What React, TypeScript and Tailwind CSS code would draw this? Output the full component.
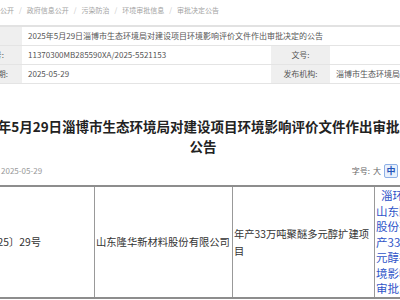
const crumbs = ["信息公开", "政府信息公开", "污染防治", "环境审批信息", "审批决定公告"];

const linkLines = [
  "淄环审〔2025〕29号",
  "山东隆华新材料",
  "股份有限公司年",
  "产33万吨聚醚多",
  "元醇扩建项目环",
  "境影响报告书的",
  "审批意见",
];

function Breadcrumb() {
  return (
    <div className="flex h-[20px] items-center whitespace-nowrap text-[7px] text-[#a3a3a3]">
      {crumbs.map((c, i) => (
        <span key={c} className={i === 0 ? "-ml-[14px] flex items-center" : "flex items-center"}>
          {i > 0 ? <span className="mx-[5px] text-[#c4c4c4]">/</span> : null}
          {c}
        </span>
      ))}
    </div>
  );
}

function InfoTable() {
  const label = "flex items-center justify-center bg-[#efefef] border-b border-[#e4e4e4]";
  const value = "flex items-center pl-[6px] border-b border-[#e4e4e4] bg-white";
  return (
    <div className="mt-[5px] -ml-[40px] grid w-[660px] grid-cols-[62px_249px_59px_290px] border-t-2 border-[#e2e2e2] text-[8px] leading-none text-[#555]">
      <div className={`${label} h-[19px]`}>标题:</div>
      <div className={`${value} col-span-3 h-[19px]`}>
        2025年5月29日淄博市生态环境局对建设项目环境影响评价文件作出审批决定的公告
      </div>
      <div className={`${label} h-[19px]`}>索引号:</div>
      <div className={`${value} h-[19px]`}>11370300MB285590XA/2025-5521153</div>
      <div className={`${label} h-[19px]`}>文号:</div>
      <div className={`${value} h-[19px]`} />
      <div className={`${label} h-[19px]`}>发布日期:</div>
      <div className={`${value} h-[19px]`}>2025-05-29</div>
      <div className={`${label} h-[19px]`}>发布机构:</div>
      <div className={`${value} h-[19px]`}>淄博市生态环境局</div>
    </div>
  );
}

function Article() {
  return (
    <div className="mt-[32px]">
      <h1 className="-ml-[40px] w-[486px] whitespace-nowrap text-center text-[13.5px] font-bold leading-[20px] text-[#222]">
        2025年5月29日淄博市生态环境局对建设项目环境影响评价文件作出审批决定的
        <br />
        公告
      </h1>
      <div className="mt-[7px] flex h-[16px] items-center justify-between pl-[1px] pr-[2px] text-[8px] text-[#999]">
        <span>2025-05-29</span>
        <div className="flex items-center gap-[3px] text-[#666]">
          <span>字号:</span>
          <span>大</span>
          <span className="flex h-[14px] w-[14px] items-center justify-center rounded-[2px] border border-[#8fb0e6] bg-[#e9f1fc] text-[9px] font-bold text-[#2554b8]">
            中
          </span>
        </div>
      </div>
      <div className="mt-[6px] -ml-[57px] grid w-[540px] grid-cols-[152px_138px_142px_108px] border-y-2 border-[#8d8d8d] text-[10.3px] text-[#333]">
        <div className="flex items-center justify-end whitespace-nowrap border-r border-[#999] pr-[53px]">
          淄环审〔2025〕29号
        </div>
        <div className="flex items-center whitespace-nowrap border-r border-[#999] pl-[1px]">
          山东隆华新材料股份有限公司
        </div>
        <div className="flex items-center border-r border-[#999] pl-[1px] leading-[17px]">
          年产33万吨聚醚多元醇扩建项目
        </div>
        <div className="whitespace-nowrap pl-[1px] pt-[1px] text-[11.5px] leading-[15.5px] text-[#2f54c8]">
          {linkLines.map((l, i) => (
            <div key={l} className={i === 0 ? "pl-[5px]" : ""}>
              {l}
            </div>
          ))}
        </div>
      </div>
    </div>
  );
}

export default function App() {
  return (
    <div className="h-[300px] w-[400px] overflow-hidden bg-white font-['Noto_Sans_CJK_SC','Noto_Sans',sans-serif]">
      <Breadcrumb />
      <InfoTable />
      <Article />
    </div>
  );
}
